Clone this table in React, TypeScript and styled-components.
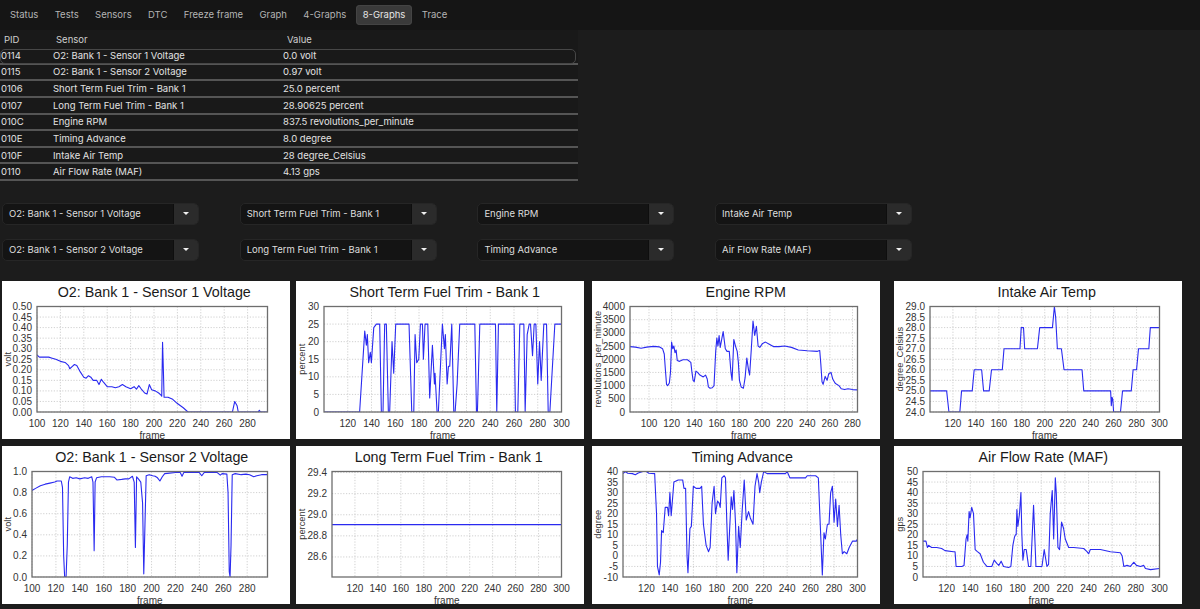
import React from "react";
import styled, { createGlobalStyle } from "styled-components";

const GlobalStyle = createGlobalStyle`
  html, body {
    margin: 0;
    padding: 0;
    background: #1c1c1c;
  }
  body {
    font-family: Inter, "Noto Sans", sans-serif;
    color: #dcdcdc;
  }
`;

// ---------- layout ----------

const Page = styled.div`
  width: 1200px;
  height: 609px;
  overflow: hidden;
  background: #1c1c1c;
`;

const TabBar = styled.div`
  display: flex;
  align-items: center;
  gap: 2.4px;
  height: 30px;
  padding: 0 3px;
  background: #151515;
`;

const Tab = styled.div<{ $active?: boolean }>`
  height: 20px;
  line-height: 20px;
  padding: 0 7px;
  border-radius: 4px;
  font-size: 9.5px;
  color: ${(p) => (p.$active ? "#e6e6e6" : "#b4b4b4")};
  background: ${(p) => (p.$active ? "#3a3a3a" : "transparent")};
  box-shadow: ${(p) => (p.$active ? "inset 0 0 0 1px #444" : "none")};
`;

const TablePanel = styled.div`
  width: 578px;
  background: #191919;
`;

const HeaderRow = styled.div`
  display: grid;
  grid-template-columns: 52px 231px 1fr;
  height: 18px;
  align-items: center;
  padding-left: 4px;
  font-size: 9.5px;
  color: #cfcfcf;
`;

const Row = styled.div<{ $selected?: boolean }>`
  position: relative;
  display: grid;
  grid-template-columns: 52px 230px 1fr;
  align-items: center;
  height: 14.65px;
  padding-left: 1px;
  border-bottom: 2px solid #555;
  font-size: 9.5px;
  color: #e2e2e2;

  &::before {
    content: "";
    display: ${(p) => (p.$selected ? "block" : "none")};
    position: absolute;
    left: 0;
    right: 2px;
    top: 1px;
    bottom: -1px;
    border: 1px solid #474747;
    border-radius: 5px;
    pointer-events: none;
  }
`;

const Cell = styled.span`
  white-space: nowrap;
`;

const SelectGrid = styled.div`
  display: grid;
  grid-template-columns: repeat(4, 197px);
  column-gap: 40.7px;
  row-gap: 14px;
  padding-left: 2px;
  margin-top: 21.5px;
`;

const SelectBox = styled.div`
  display: flex;
  height: 22px;
  border: 1px solid #262626;
  border-radius: 5px;
  background: #141414;
  box-sizing: border-box;
  overflow: hidden;
`;

const SelectText = styled.div`
  flex: 1;
  display: flex;
  align-items: center;
  padding-left: 6px;
  font-size: 9.5px;
  color: #dedede;
  white-space: nowrap;
`;

const SelectButton = styled.div`
  width: 24px;
  display: flex;
  align-items: center;
  justify-content: center;
  background: #2b2b2b;
  border-left: 1px solid #0e0e0e;
`;

const Caret = styled.span`
  width: 0;
  height: 0;
  border-left: 3px solid transparent;
  border-right: 3px solid transparent;
  border-top: 3px solid #f0f0f0;
`;

const ChartGrid = styled.div`
  display: grid;
  grid-template-columns: 294px 296px 302px 288px;
  row-gap: 7px;
  padding-left: 2px;
  margin-top: 20.3px;
`;

const ChartCard = styled.div`
  width: 288px;
  height: 158px;
  background: #ffffff;
  overflow: hidden;
`;

// ---------- chart ----------

type ChartSpec = {
  title: string;
  yLabel: string;
  x: [number, number];
  y: [number, number];
  yTicks: number[];
  yDigits: number;
  xTicks: number[];
  left: number;
  data: number[];
};

const W = 288;
const H = 158;
const RIGHT = 265.5;
const TOP = 25.5;
const BOTTOM = 131;

const range = (a: number, b: number, s: number) => {
  const out: number[] = [];
  for (let v = a; v <= b + s * 1e-6; v += s) out.push(Math.round(v * 1000) / 1000);
  return out;
};

const Chart: React.FC<{ spec: ChartSpec; id: string }> = ({ spec, id }) => {
  const { x, y, left } = spec;
  const sx = (v: number) => left + ((v - x[0]) / (x[1] - x[0])) * (RIGHT - left);
  const sy = (v: number) => BOTTOM - ((v - y[0]) / (y[1] - y[0])) * (BOTTOM - TOP);
  const pts: string[] = [];
  for (let i = 0; i < spec.data.length; i += 2) {
    pts.push(`${sx(spec.data[i]).toFixed(2)},${sy(spec.data[i + 1]).toFixed(2)}`);
  }
  const midY = (TOP + BOTTOM) / 2;

  return (
    <svg width={W} height={H} viewBox={`0 0 ${W} ${H}`}>
      <defs>
        <clipPath id={id}>
          <rect x={left} y={TOP} width={RIGHT - left} height={BOTTOM - TOP} />
        </clipPath>
      </defs>
      <text
        x={(left + RIGHT) / 2 + 2}
        y={16}
        textAnchor="middle"
        fontFamily="'Liberation Sans', Arial, sans-serif"
        fontSize={14.3}
        fill="#1a1a1a"
      >
        {spec.title}
      </text>

      {spec.yTicks.map((v) => (
        <line
          key={"gy" + v}
          x1={left}
          x2={RIGHT}
          y1={sy(v)}
          y2={sy(v)}
          stroke="#c4c4c4"
          strokeWidth={0.8}
          strokeDasharray="1.2 1.6"
        />
      ))}
      {spec.xTicks.map((v) => (
        <line
          key={"gx" + v}
          x1={sx(v)}
          x2={sx(v)}
          y1={TOP}
          y2={BOTTOM}
          stroke="#c4c4c4"
          strokeWidth={0.8}
          strokeDasharray="1.2 1.6"
        />
      ))}

      <polyline
        points={pts.join(" ")}
        fill="none"
        stroke="#2a2af0"
        strokeWidth={1.1}
        strokeLinejoin="round"
        clipPath={`url(#${id})`}
      />

      <rect
        x={left}
        y={TOP}
        width={RIGHT - left}
        height={BOTTOM - TOP}
        fill="none"
        stroke="#6e6e6e"
        strokeWidth={1.3}
      />

      <g fontFamily="'Liberation Sans', Arial, sans-serif" fontSize={10} fill="#333">
        {spec.yTicks.map((v) => (
          <text key={"ty" + v} x={left - 5} y={sy(v) + 3.5} textAnchor="end">
            {v.toFixed(spec.yDigits)}
          </text>
        ))}
        {spec.xTicks.map((v) => (
          <text key={"tx" + v} x={sx(v)} y={BOTTOM + 15} textAnchor="middle">
            {v}
          </text>
        ))}
        <text x={(left + RIGHT) / 2} y={157.5} textAnchor="middle">
          frame
        </text>
        <text
          x={8.5}
          y={midY}
          fontSize={9.3}
          textAnchor="middle"
          transform={`rotate(-90 8.5 ${midY})`}
        >
          {spec.yLabel}
        </text>
      </g>
    </svg>
  );
};

// ---------- data ----------

const tabs = ["Status", "Tests", "Sensors", "DTC", "Freeze frame", "Graph", "4-Graphs", "8-Graphs", "Trace"];

const sensorRows = [
  ["0114", "O2: Bank 1 - Sensor 1 Voltage", "0.0 volt"],
  ["0115", "O2: Bank 1 - Sensor 2 Voltage", "0.97 volt"],
  ["0106", "Short Term Fuel Trim - Bank 1", "25.0 percent"],
  ["0107", "Long Term Fuel Trim - Bank 1", "28.90625 percent"],
  ["010C", "Engine RPM", "837.5 revolutions_per_minute"],
  ["010E", "Timing Advance", "8.0 degree"],
  ["010F", "Intake Air Temp", "28 degree_Celsius"],
  ["0110", "Air Flow Rate (MAF)", "4.13 gps"],
];

const selects = [
  "O2: Bank 1 - Sensor 1 Voltage",
  "Short Term Fuel Trim - Bank 1",
  "Engine RPM",
  "Intake Air Temp",
  "O2: Bank 1 - Sensor 2 Voltage",
  "Long Term Fuel Trim - Bank 1",
  "Timing Advance",
  "Air Flow Rate (MAF)",
];

const ticks100 = range(100, 280, 20);
const ticks120 = range(120, 300, 20);

const charts: ChartSpec[] = [
  {
    title: "O2: Bank 1 - Sensor 1 Voltage",
    yLabel: "volt",
    x: [100, 297],
    y: [0, 0.5],
    yTicks: range(0, 0.5, 0.05),
    yDigits: 2,
    xTicks: ticks100,
    left: 35,
    data: [
      100, 0.27, 102, 0.26, 110, 0.26, 113, 0.255, 116, 0.25, 120, 0.24, 124, 0.235, 127, 0.22, 128, 0.205,
      130, 0.215, 132, 0.225, 134, 0.22, 137, 0.19, 140, 0.165, 142, 0.16, 144, 0.172, 146, 0.165, 148, 0.15,
      151, 0.15, 153, 0.13, 155, 0.155, 157, 0.14, 160, 0.12, 164, 0.12, 167, 0.115, 170, 0.12, 173, 0.13,
      176, 0.12, 180, 0.11, 183, 0.12, 185, 0.108, 187, 0.125, 189, 0.11, 192, 0.09, 194, 0.085, 196, 0.13,
      198, 0.105, 201, 0.1, 204, 0.09, 206, 0.08, 206.6, 0.075, 207.3, 0.33, 208, 0.2, 208.6, 0.07, 212, 0.07,
      216, 0.06, 220, 0.04, 225, 0.02, 229, 0, 267, 0, 269, 0.05, 271, 0.03, 272, 0, 289, 0, 290, 0.008,
      291, 0, 297, 0,
    ],
  },
  {
    title: "Short Term Fuel Trim - Bank 1",
    yLabel: "percent",
    x: [100, 300],
    y: [0, 30],
    yTicks: range(0, 30, 5),
    yDigits: 0,
    xTicks: ticks120,
    left: 28,
    data: [
      100, 0, 130, 0, 134.3, 23, 135.7, 19, 136.5, 22, 137.6, 14, 139, 17, 139.9, 14, 141.9, 24, 144.1, 25,
      146.9, 25, 148.3, 0, 149.7, 0, 151.1, 25, 152.5, 25, 154.2, 0, 155.3, 0, 157.3, 20, 158.7, 11, 160.4, 25,
      171.6, 25, 173.9, 0, 175.6, 0, 176.7, 22, 178.1, 14, 179.8, 15, 181.2, 25, 182.9, 25, 183.7, 15,
      185.1, 25, 187.4, 25, 189, 4, 191.3, 19, 193, 8, 193.5, 11, 195.2, 0, 196.3, 0, 199.7, 25, 201.4, 18,
      202.2, 22, 203.7, 8, 204.8, 13, 205.9, 13, 207.6, 25, 209.3, 0, 210.4, 0, 212.1, 8, 214.3, 25, 227, 25,
      228.4, 0, 229.2, 0, 231.2, 25, 244.4, 25, 245.5, 0, 246.9, 25, 260.1, 25, 261.2, 0, 263.2, 0, 264.9, 25,
      268.3, 25, 269.4, 0, 271.1, 22, 272.8, 25, 273.9, 25, 275.6, 16, 277, 25, 278.4, 25, 280, 8, 281.5, 20,
      282.9, 9, 285.1, 25, 287.4, 25, 288.8, 0, 290.2, 0, 294.4, 25, 300, 25,
    ],
  },
  {
    title: "Engine RPM",
    yLabel: "revolutions_per_minute",
    x: [83.2, 284.4],
    y: [0, 4000],
    yTicks: range(0, 4000, 500),
    yDigits: 0,
    xTicks: ticks100,
    left: 38,
    data: [
      83.2, 2480, 88, 2460, 93, 2420, 98, 2460, 104, 2490, 109, 2470, 112, 2400, 113.5, 2200, 114.5, 1600,
      115.5, 1050, 116.5, 1000, 118, 1100, 119, 1500, 120, 2650, 121, 2400, 122, 2500, 123, 2250, 124, 2350,
      125, 1950, 127, 1920, 130, 1980, 134, 1980, 137, 1880, 138, 1500, 139, 1200, 140, 1150, 141.5, 1550,
      143, 1500, 145, 1400, 148, 1330, 150, 1400, 151.5, 1250, 152.5, 950, 154, 900, 156, 920, 157.5, 1000,
      159, 2300, 160, 2800, 161, 2500, 162, 2900, 163, 2450, 164.5, 2800, 165.6, 3050, 167.5, 2400, 169, 2300,
      171, 2300, 172.5, 1500, 173.5, 1200, 175, 2750, 176.5, 2500, 178, 2300, 179, 1900, 180, 1200, 181.5, 950,
      183.5, 900, 185, 1300, 186.5, 2050, 188, 1600, 189, 1400, 190.5, 2400, 192, 3450, 193.5, 2900, 195, 3250,
      196.5, 2500, 198, 2450, 200.5, 2600, 203, 2650, 206, 2580, 210, 2480, 215, 2480, 220, 2500, 226, 2450,
      232, 2350, 240, 2320, 249, 2300, 251, 2330, 252, 1800, 253, 1150, 254, 1050, 255.8, 1350, 257.5, 1200,
      259, 1450, 261, 1500, 262.5, 1250, 264.5, 1100, 266, 1050, 268, 1000, 270, 880, 273, 850, 276, 880,
      280, 850, 284.4, 840,
    ],
  },
  {
    title: "Intake Air Temp",
    yLabel: "degree_Celsius",
    x: [100, 300],
    y: [24, 29],
    yTicks: range(24, 29, 0.5),
    yDigits: 1,
    xTicks: ticks120,
    left: 36,
    data: [
      100, 25, 114.5, 25, 116.5, 24, 126, 24, 127.5, 25, 136.8, 25, 138.5, 26, 145, 26, 146.7, 25, 151.6, 25,
      153.6, 26, 163, 26, 164.5, 27, 178.4, 27, 179.5, 28, 181.5, 28, 182.5, 27, 193.6, 27, 195.6, 28,
      206.7, 28, 208.4, 29, 209.5, 28.5, 211, 27, 214.5, 27, 216.8, 26, 232.5, 26, 234, 25, 257.4, 25,
      258, 24.3, 258.6, 24.7, 259.3, 24.6, 260, 24, 266, 24, 267.8, 25, 275.4, 25, 277, 26, 280, 26,
      281.7, 27, 290.7, 27, 292, 28, 300, 28,
    ],
  },
  {
    title: "O2: Bank 1 - Sensor 2 Voltage",
    yLabel: "volt",
    x: [100, 297],
    y: [0, 1],
    yTicks: range(0, 1, 0.2),
    yDigits: 1,
    xTicks: ticks100,
    left: 30,
    data: [
      100, 0.82, 103, 0.84, 107, 0.865, 111, 0.88, 115, 0.89, 119, 0.9, 121, 0.91, 124.5, 0.91, 125.5, 0.85,
      126.5, 0.2, 127.3, 0, 128.5, 0, 129.5, 0.3, 130.5, 0.9, 131.5, 0.95, 134, 0.935, 137, 0.94, 140, 0.93,
      144, 0.94, 147, 0.935, 150, 0.95, 151, 0.9, 152, 0.25, 152.8, 0.9, 154, 0.94, 158, 0.95, 165, 0.95,
      169, 0.945, 171, 0.92, 175, 0.925, 178, 0.93, 181, 0.93, 184, 0.955, 185.5, 0.9, 186.5, 0.28, 187.5, 0.95,
      189, 0.93, 191, 0.9, 192.5, 0.7, 193.5, 0.03, 194.5, 0.5, 195.5, 0.96, 198, 0.97, 201, 0.96, 203, 0.955,
      205, 0.94, 207, 0.91, 209, 0.95, 211, 0.98, 215, 0.985, 220, 0.99, 224, 0.99, 225.5, 0.955, 227, 0.99,
      235, 0.99, 240, 0.99, 242, 0.96, 244, 0.99, 255, 0.99, 257.5, 0.965, 259, 0.98, 263, 0.975, 264, 0.8,
      265, 0.05, 265.7, 0, 266.5, 0.3, 267.5, 0.97, 270, 0.98, 275, 0.97, 279, 0.975, 282, 0.97, 285.5, 0.95,
      288, 0.96, 292, 0.97, 297, 0.97,
    ],
  },
  {
    title: "Long Term Fuel Trim - Bank 1",
    yLabel: "percent",
    x: [100, 300],
    y: [28.41, 29.41],
    yTicks: [28.6, 28.8, 29.0, 29.2, 29.4],
    yDigits: 1,
    xTicks: ticks120,
    left: 36,
    data: [100, 28.90625, 300, 28.90625],
  },
  {
    title: "Timing Advance",
    yLabel: "degree",
    x: [100, 300],
    y: [-10, 40],
    yTicks: range(-10, 40, 5),
    yDigits: 0,
    xTicks: ticks120,
    left: 31,
    data: [
      100, 39, 102, 40, 104, 39.2, 108, 39, 110.5, 38.5, 113, 39.3, 117, 40, 120, 40, 122, 39.2, 127, 39,
      128.6, 20, 129.4, -5, 130.9, -9, 132, -3, 132.9, 12, 134.3, 11, 136, 23, 138, 23, 138.9, 19, 140, 30,
      141.1, 19, 143.4, 35, 147.1, 36, 150.9, 36, 152, 32, 153.4, 32, 154.6, 0, 155.4, -8, 157.1, 13,
      158.3, 14, 160, 33, 162.3, 32, 165.7, 32, 167.1, 33, 168.6, 15, 170.9, 5, 172.9, 2, 174.3, 4, 176, 25,
      177.7, 33, 178.9, 20, 180.6, 26, 182, 25, 182.9, 23, 184.3, 37, 186.3, 38, 187.4, 37, 188.6, 15,
      189.7, -2, 190.9, 12, 192.3, 28, 193.4, 22, 194.6, 31, 196, 15, 197.1, -8, 198.6, 14, 200, 4,
      201.7, 22, 203.4, 36, 205.1, 17, 207.1, 21, 208.6, 18, 210.9, 15, 212.6, 33, 214.3, 39, 215.7, 35,
      216.6, 30, 218, 35, 220, 40, 222.9, 39, 228.6, 39, 238.6, 39, 240, 40, 242.3, 37, 255.7, 37, 257.1, 38,
      264.3, 38, 266.6, 37, 268.6, 10, 270, -9, 271.4, 11, 272.6, 8, 274.3, 15, 275.7, 15, 277.1, 30,
      278.6, 33, 280, 16, 281.4, 27, 282.9, 14, 284.3, 24, 285.7, 10, 287.1, 1, 288.6, 2, 290.9, 1, 292.9, 4,
      295.7, 7, 299, 7, 300, 8,
    ],
  },
  {
    title: "Air Flow Rate (MAF)",
    yLabel: "gps",
    x: [100, 300],
    y: [0, 50],
    yTicks: range(0, 50, 5),
    yDigits: 0,
    xTicks: ticks120,
    left: 29,
    data: [
      100, 17, 102.5, 17, 103.7, 14, 104.8, 15, 107.3, 14, 111.6, 14, 115.8, 13.5, 118.6, 12.5, 125.7, 12,
      127.1, 12, 128, 5, 132.8, 5, 134.7, 5.5, 136.4, 18, 137.3, 20, 137.9, 17, 139, 31, 139.8, 28, 141.2, 33,
      142.7, 30, 144.1, 13, 146, 12, 148.3, 11, 151.1, 7, 154, 5, 158.2, 5, 160.2, 8, 162.4, 6.5, 164.1, 5.5,
      166.1, 7.5, 168.1, 5, 172.3, 4.5, 174.3, 5, 176, 15, 177.4, 19, 178.2, 20, 178.8, 20, 179.4, 32,
      180.2, 24, 181.6, 30, 182.8, 40, 183.6, 20, 184.5, 8, 185.6, 13, 187.3, 13, 189.3, 5, 191.2, 5,
      193.5, 34, 195.5, 5, 199.2, 5, 200.6, 5, 202.5, 13, 204.8, 5, 206.2, 6, 207.6, 30, 209.3, 41, 210.5, 18,
      211.9, 47, 212.7, 40, 214.1, 14, 215.5, 13, 217.2, 26, 218.9, 23, 220.3, 18, 223.2, 14, 227.4, 14,
      235.9, 13.5, 238.7, 12, 240.1, 11, 241.5, 13, 250, 13, 258.5, 12, 266.9, 11.5, 268.4, 10, 269.8, 5,
      272.6, 5.5, 275.4, 5, 278.2, 7, 280.5, 5.5, 283.9, 5, 286.7, 5.5, 288.1, 4, 292.4, 3.5, 300, 4,
    ],
  },
];

// ---------- app ----------

const App: React.FC = () => {
  return (
    <Page>
      <GlobalStyle />
      <TabBar>
        {tabs.map((t) => (
          <Tab key={t} $active={t === "8-Graphs"}>
            {t}
          </Tab>
        ))}
      </TabBar>

      <TablePanel>
        <HeaderRow>
          <Cell>PID</Cell>
          <Cell>Sensor</Cell>
          <Cell>Value</Cell>
        </HeaderRow>
        {sensorRows.map((r, i) => (
          <Row key={r[0]} $selected={i === 0}>
            <Cell>{r[0]}</Cell>
            <Cell>{r[1]}</Cell>
            <Cell>{r[2]}</Cell>
          </Row>
        ))}
      </TablePanel>

      <SelectGrid>
        {selects.map((s, i) => (
          <SelectBox key={i}>
            <SelectText>{s}</SelectText>
            <SelectButton>
              <Caret />
            </SelectButton>
          </SelectBox>
        ))}
      </SelectGrid>

      <ChartGrid>
        {charts.map((c, i) => (
          <ChartCard key={i}>
            <Chart spec={c} id={"plot" + i} />
          </ChartCard>
        ))}
      </ChartGrid>
    </Page>
  );
};

export default App;
